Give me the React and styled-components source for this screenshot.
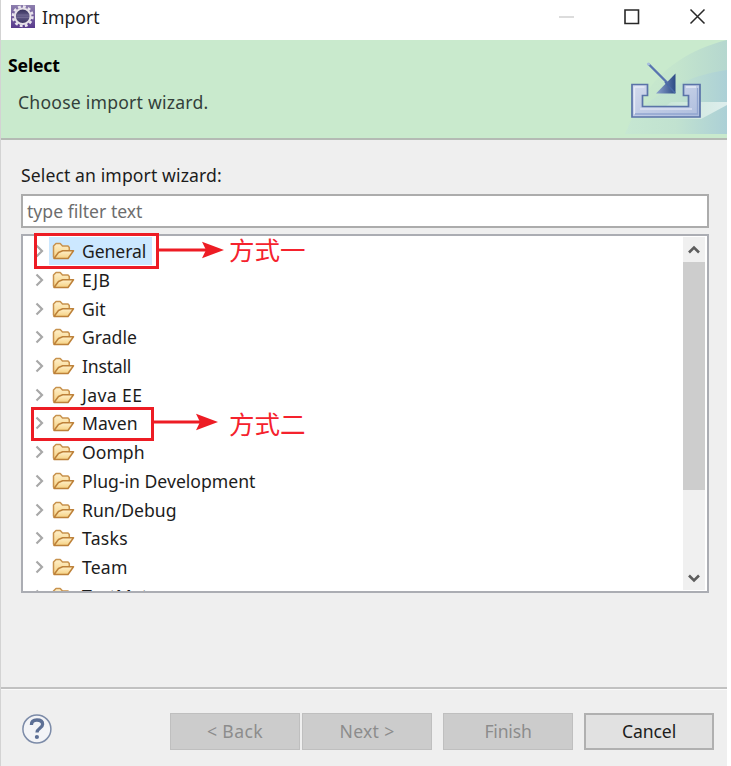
import React from "react";
import styled, { createGlobalStyle } from "styled-components";

const GlobalStyle = createGlobalStyle`
  * {
    box-sizing: border-box;
  }

  body {
    margin: 0;
    background: #fff;
    overflow: hidden;
  }
`;

const Dialog = styled.div`
  width: 727px;
  height: 766px;
  display: flex;
  flex-direction: column;
  position: relative;
  background: #efefef;
  border-left: 1px solid #d3d3d3;
  color: #1c1c1c;
  font-family: "Noto Sans", "Noto Sans CJK SC", sans-serif;
  font-size: 17.6px;
  line-height: 24px;
  white-space: nowrap;
`;

const TitleBar = styled.header`
  height: 40px;
  flex: none;
  display: flex;
  align-items: flex-start;
  padding: 5px 20px 0 10px;
  background: #fff;
`;

const Label = styled.span`
  display: block;
  letter-spacing: ${({ $spacing }) => $spacing || 0}px;
`;

const TitleText = styled(Label)`
  flex: 1;
  margin-left: 6px;
`;

const WindowControls = styled.div`
  display: flex;
  gap: 48px;
  padding-top: 3px;
`;

const Banner = styled.section`
  height: 100px;
  flex: none;
  display: flex;
  justify-content: space-between;
  background: #c9eacd;
  border-bottom: 2px solid #b4bab4;
`;

const BannerText = styled.div`
  padding: 13px 0 0 7px;
`;

const BannerTitle = styled.h1`
  margin: 0;
  color: #000;
  font-size: 17.6px;
  font-weight: 700;
  line-height: 24px;
  letter-spacing: -0.15px;
`;

const BannerHint = styled.p`
  margin: 13px 0 0 10px;
  color: #33403a;
  letter-spacing: 0.22px;
`;

const Content = styled.main`
  flex: 1;
  padding: 23px 18px 0 20px;
`;

const FilterInput = styled.div`
  height: 34px;
  margin-top: 7px;
  padding: 3px 4px;
  border: 2px solid #acacac;
  background: #fff;
  color: #6d6d6d;
`;

const TreeBox = styled.div`
  height: 359px;
  margin-top: 6px;
  display: flex;
  border: 2px solid #abadb3;
  background: #fff;
  overflow: hidden;
`;

const Tree = styled.ul`
  flex: 1;
  margin: 0;
  padding: 1px 0 0 12px;
  list-style: none;
`;

const TreeRow = styled.li`
  height: 28.7px;
  display: flex;
  align-items: center;
`;

const TreeItem = styled.div`
  height: 28px;
  display: flex;
  align-items: center;
  gap: 7px;
  margin-left: 5px;
  padding: 0 6px 0 3px;
  background: ${({ $selected }) => ($selected ? "#cce8ff" : "transparent")};
`;

const Scrollbar = styled.div`
  width: 22px;
  flex: none;
  display: flex;
  flex-direction: column;
  align-items: center;
  margin: 1px 2px 1px 0;
  padding: 8px 0 7px;
  background: #f0f0f0;
`;

const ScrollThumb = styled.div`
  width: 22px;
  height: 228px;
  margin: 8px 0 auto;
  background: #cdcdcd;
`;

const Footer = styled.footer`
  height: 79px;
  flex: none;
  display: flex;
  align-items: flex-start;
  padding: 24px 13px 0 20px;
  border-top: 2px solid #c1c1c1;
  box-shadow: inset 0 1px #fafafa;
`;

const Buttons = styled.div`
  display: flex;
  margin-left: auto;
`;

const Button = styled.button`
  width: 130px;
  height: 37px;
  margin-left: ${({ $gap }) => $gap}px;
  padding: 0 0 2px;
  border: ${({ disabled }) => (disabled ? "1px solid #bfbfbf" : "2px solid #b0b0b0")};
  background: ${({ disabled }) => (disabled ? "#cccccc" : "#e1e1e1")};
  color: ${({ disabled }) => (disabled ? "#8c8c8c" : "#1c1c1c")};
  font: inherit;
  letter-spacing: ${({ $spacing }) => $spacing || 0}px;
`;

const Callout = styled.div`
  position: absolute;
  left: ${({ $left }) => $left}px;
  top: ${({ $top }) => $top}px;
  display: flex;
  align-items: flex-start;
`;

const CalloutBox = styled.div`
  width: ${({ $width }) => $width}px;
  height: ${({ $height }) => $height}px;
  border: 3px solid #ed1c24;
`;

const CalloutText = styled.span`
  margin-left: ${({ $gap }) => $gap}px;
  color: #f5222d;
  font-family: "Noto Sans CJK SC", sans-serif;
  font-size: 25.5px;
  line-height: 32px;
`;

const EclipseIcon = () => (
  <svg width="25" height="24" viewBox="0 0 25 24">
    <defs>
      <linearGradient id="purple" x1="0" y1="0" x2="0" y2="1">
        <stop offset="0" stopColor="#8d7fae" />
        <stop offset="1" stopColor="#583a8c" />
      </linearGradient>
      <linearGradient id="moon" x1="0" y1="0" x2="0" y2="1">
        <stop offset="0" stopColor="#302b55" />
        <stop offset=".5" stopColor="#625b88" />
        <stop offset="1" stopColor="#39315e" />
      </linearGradient>
    </defs>
    <rect width="24" height="23" fill="url(#purple)" />
    <circle cx="11.7" cy="11.3" r="9.7" fill="none" stroke="#e9e4ee" strokeWidth="2.6" strokeDasharray="2.8 2.28" />
    <circle cx="11.7" cy="11.3" r="7.8" fill="url(#moon)" stroke="#e6e1e8" strokeWidth="2" />
    <path d="M5.5 10h12.4M5.5 12.5h12.4" stroke="#8982a4" strokeWidth=".5" />
  </svg>
);

const ImportArt = () => (
  <svg width="106" height="98" viewBox="0 0 106 98">
    <defs>
      <linearGradient id="sweep" x1="0" x2="1">
        <stop offset="0" stopColor="#c9eacd" />
        <stop offset=".5" stopColor="#c4e5cd" />
        <stop offset="1" stopColor="#b5d7cf" />
      </linearGradient>
      <linearGradient id="sweepLow" x1="0" x2="1">
        <stop offset="0" stopColor="#c6e7d2" />
        <stop offset=".5" stopColor="#c1e2d0" />
        <stop offset="1" stopColor="#acd0d6" />
      </linearGradient>
      <linearGradient id="glow" x1="0" x2="1">
        <stop offset="0" stopColor="#c4e4d2" />
        <stop offset="1" stopColor="#deeeed" />
      </linearGradient>
      <linearGradient id="tray" x1="0" y1="0" x2="1" y2="1">
        <stop offset="0" stopColor="#d3dbed" />
        <stop offset="1" stopColor="#aebddd" />
      </linearGradient>
      <linearGradient id="head" x1="0" x2="1">
        <stop offset="0" stopColor="#8ca2cd" />
        <stop offset="1" stopColor="#2d4b86" />
      </linearGradient>
    </defs>
    <path d="M106 0C69 9 40 29 24 55 12 72 5 83 4 94h102z" fill="url(#sweep)" />
    <path d="M106 30C72 34 35 52 12 76L4 94h102z" fill="url(#sweepLow)" />
    <path d="M50 62h56v3L80 79H29z" fill="url(#glow)" />
    <path
      d="M11 44.500h15.500v11h-5v11h46v-11h-5v-11h16.500v32.500H11z"
      fill="url(#tray)"
      stroke="#5a73a8"
      strokeWidth="1.700"
    />
    <path d="M13.500 47h10M13.500 47v27M65 47h10" fill="none" stroke="#e5eaf6" strokeWidth="1.300" />
    <path d="M19 69h52" fill="none" stroke="#dbe1f2" strokeWidth="1.300" />
    <path d="M14 74h62.500V48" fill="none" stroke="#91a5d0" strokeWidth="1.300" />
    <path d="M27.500 24l20 20" stroke="#5874b0" strokeWidth="2.400" />
    <circle cx="27.500" cy="24" r="1.600" fill="#a8bfdc" />
    <path d="M54.500 33.500v20H35z" fill="url(#head)" />
    <path d="M44 42l10 11" stroke="#4a6aa7" strokeWidth="1.600" />
  </svg>
);

const Chevron = () => (
  <svg width="9" height="14" viewBox="0 0 9 14">
    <path d="M1.500 1.500L7 7l-5.500 5.500" fill="none" stroke="#a8a8a8" strokeWidth="2.200" />
  </svg>
);

const FolderIcon = () => (
  <svg width="23" height="18" viewBox="0 0 23 18">
    <defs>
      <linearGradient id="folder" x1="0" y1="0" x2="0" y2="1">
        <stop offset="0" stopColor="#fff0ca" />
        <stop offset="1" stopColor="#f5d080" />
      </linearGradient>
    </defs>
    <path
      d="M1.500 15V4L4 1.500h4.200L10.500 4H16l1.300 1.500V9L13 16H2.500z"
      fill="url(#folder)"
      stroke="#c8924d"
      strokeWidth="1.500"
      strokeLinejoin="round"
    />
    <path
      d="M2 16.500l4.500-6 4.200-1.700h10.800L16 16.500z"
      fill="url(#folder)"
      stroke="#bd8139"
      strokeWidth="1.500"
      strokeLinejoin="round"
    />
  </svg>
);

const ScrollArrow = ({ down }) => (
  <svg width="12" height="9" viewBox="0 0 12 9">
    <path d={down ? "M1 1.500l5 5 5-5" : "M1 7.500l5-5 5 5"} fill="none" stroke="#5d5d5d" strokeWidth="2.600" />
  </svg>
);

const HelpIcon = () => (
  <svg width="32" height="31" viewBox="0 0 32 31">
    <circle cx="15.900" cy="16" r="14" fill="#f3f4f7" stroke="#7c8ba8" strokeWidth="1.500" />
    <path
      d="M10.400 12c0-3.300 2.200-5 5.500-5 3.600 0 5.700 1.700 5.700 4.300 0 4-5.600 4-5.600 8.200"
      fill="none"
      stroke="#5c6f95"
      strokeWidth="3.300"
    />
    <circle cx="15.900" cy="24" r="2.100" fill="#5c6f95" />
  </svg>
);

const ArrowSvg = styled.svg`
  margin-top: ${({ $drop }) => $drop}px;
`;

const Arrow = ({ width, drop }) => (
  <ArrowSvg $drop={drop} width={width} height="18" viewBox={`0 0 ${width} 18`}>
    <path d={`M0 9H${width - 15}`} stroke="#ed1c24" strokeWidth="3" />
    <path d={`M${width} 9L${width - 22} .8 ${width - 18} 9l-4 8.200z`} fill="#ed1c24" />
  </ArrowSvg>
);

const wizards = [
  { name: "General", spacing: -0.1 },
  { name: "EJB", spacing: 0.4 },
  { name: "Git" },
  { name: "Gradle" },
  { name: "Install", spacing: -0.2 },
  { name: "Java EE", spacing: 0.4 },
  { name: "Maven" },
  { name: "Oomph" },
  { name: "Plug-in Development" },
  { name: "Run/Debug" },
  { name: "Tasks", spacing: 0.3 },
  { name: "Team", spacing: 0.2 },
  { name: "TextMate" },
];

const App = () => {
  return (
    <>
      <GlobalStyle />
      <Dialog>
        <TitleBar>
          <EclipseIcon />
          <TitleText>Import</TitleText>
          <WindowControls>
            <svg width="18" height="18" viewBox="0 0 18 18">
              <path d="M2 9h15" stroke="#d0d0d0" strokeWidth="1.500" />
            </svg>
            <svg width="18" height="18" viewBox="0 0 18 18">
              <path d="M2 2h13.500v13.500H2z" fill="none" stroke="#282828" strokeWidth="1.600" />
            </svg>
            <svg width="18" height="18" viewBox="0 0 18 18">
              <path d="M1.500 1.500l14 14M15.500 1.500l-14 14" stroke="#282828" strokeWidth="1.500" />
            </svg>
          </WindowControls>
        </TitleBar>
        <Banner>
          <BannerText>
            <BannerTitle>Select</BannerTitle>
            <BannerHint>Choose import wizard.</BannerHint>
          </BannerText>
          <ImportArt />
        </Banner>
        <Content>
          <Label $spacing={0.1}>Select an import wizard:</Label>
          <FilterInput>type filter text</FilterInput>
          <TreeBox>
            <Tree>
              {wizards.map(({ name, spacing }, index) => (
                <TreeRow key={name}>
                  <Chevron />
                  <TreeItem $selected={index === 0}>
                    <FolderIcon />
                    <Label $spacing={spacing}>{name}</Label>
                  </TreeItem>
                </TreeRow>
              ))}
            </Tree>
            <Scrollbar>
              <ScrollArrow />
              <ScrollThumb />
              <ScrollArrow down />
            </Scrollbar>
          </TreeBox>
        </Content>
        <Footer>
          <HelpIcon />
          <Buttons>
            <Button disabled $spacing={0.4}>&lt; Back</Button>
            <Button disabled $gap={2} $spacing={0.3}>Next &gt;</Button>
            <Button disabled $gap={11} $spacing={-0.2}>Finish</Button>
            <Button $gap={11} $spacing={-0.1}>Cancel</Button>
          </Buttons>
        </Footer>
        <Callout $left={33} $top={233}>
          <CalloutBox $width={125} $height={36} />
          <Arrow width={65} drop={8} />
          <CalloutText $gap={5}>方式一</CalloutText>
        </Callout>
        <Callout $left={30} $top={407}>
          <CalloutBox $width={123} $height={34} />
          <Arrow width={64} drop={6} />
          <CalloutText $gap={11}>方式二</CalloutText>
        </Callout>
      </Dialog>
    </>
  );
};

export default App;
